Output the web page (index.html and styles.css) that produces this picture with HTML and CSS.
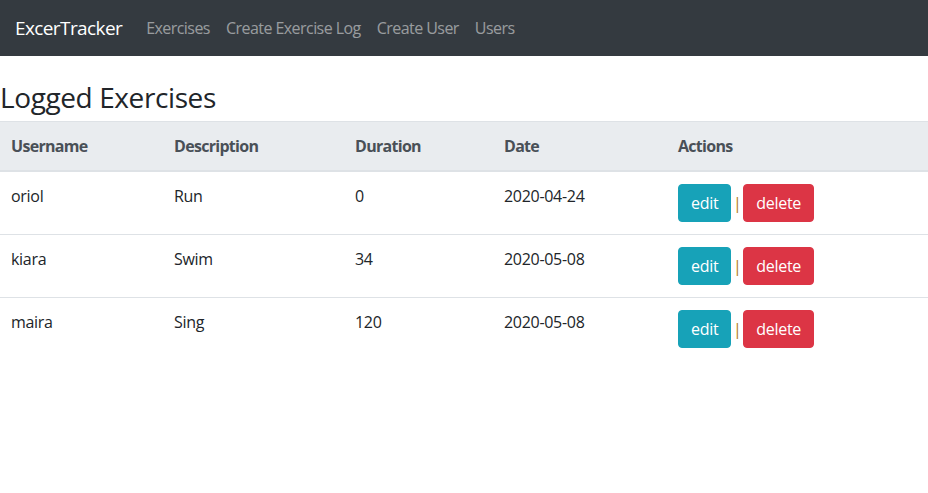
FILE: index.html
```html
<!DOCTYPE html>
<html lang="en">
<head>
<meta charset="utf-8">
<title>ExcerTracker</title>
<link rel="stylesheet" href="styles.css">
</head>
<body>
<nav class="navbar">
  <a class="brand" href="#">ExcerTracker</a>
  <ul class="nav">
    <li><a class="nav-link" href="#">Exercises</a></li>
    <li><a class="nav-link" href="#">Create Exercise Log</a></li>
    <li><a class="nav-link" href="#">Create User</a></li>
    <li><a class="nav-link" href="#">Users</a></li>
  </ul>
</nav>
<main>
  <h3 class="title">Logged Exercises</h3>
  <table class="table">
    <thead>
      <tr>
        <th class="c-user">Username</th>
        <th class="c-desc">Description</th>
        <th class="c-dur">Duration</th>
        <th class="c-date">Date</th>
        <th class="c-act">Actions</th>
      </tr>
    </thead>
    <tbody>
      <tr>
        <td>oriol</td><td>Run</td><td>0</td><td>2020-04-24</td>
        <td class="actions"><button class="btn btn-info">edit</button><span class="sep">|</span><button class="btn btn-danger">delete</button></td>
      </tr>
      <tr>
        <td>kiara</td><td>Swim</td><td>34</td><td>2020-05-08</td>
        <td class="actions"><button class="btn btn-info">edit</button><span class="sep">|</span><button class="btn btn-danger">delete</button></td>
      </tr>
      <tr>
        <td>maira</td><td>Sing</td><td>120</td><td>2020-05-08</td>
        <td class="actions"><button class="btn btn-info">edit</button><span class="sep">|</span><button class="btn btn-danger">delete</button></td>
      </tr>
    </tbody>
  </table>
</main>
</body>
</html>
```

FILE: styles.css
```css
* { box-sizing: border-box; }
html, body {
  margin: 0;
  padding: 0;
  background: #fff;
}
body {
  font-family: "Open Sans", "Noto Sans", sans-serif;
  font-size: 16px;
  line-height: 24px;
  color: #212529;
}
.navbar {
  display: flex;
  align-items: center;
  height: 56px;
  padding: 8px 15px;
  background: #343a40;
}
.brand {
  font-size: 19px;
  line-height: 30px;
  color: #fff;
  text-decoration: none;
  margin-right: 16px;
  letter-spacing: -0.6px;
}
.nav {
  display: flex;
  list-style: none;
  margin: 0;
  padding: 0;
}
.nav-link {
  display: block;
  padding: 8px;
  color: rgba(255, 255, 255, 0.5);
  text-decoration: none;
  letter-spacing: -0.55px;
}
main { padding: 0; }
.title {
  margin: 25px 0 8px;
  font-size: 28px;
  line-height: 32px;
  font-weight: 500;
  letter-spacing: -0.4px;
}
.table {
  width: 100%;
  border-collapse: collapse;
  table-layout: fixed;
}
.table th, .table td {
  padding: 12px;
  text-align: left;
  vertical-align: top;
  border-top: 1px solid #dee2e6;
  letter-spacing: -0.3px;
}
.table th:first-child, .table td:first-child { padding-left: 11px; }
.table thead th {
  background: #e9ecef;
  color: #495057;
  font-weight: 700;
  letter-spacing: -0.7px;
  border-bottom: 2px solid #dee2e6;
}
.c-user { width: 162px; }
.c-desc { width: 181px; }
.c-dur { width: 149px; }
.c-date { width: 174px; }
.actions {
  white-space: nowrap;
}
.btn {
  display: inline-block;
  margin: 0;
  font-family: inherit;
  font-size: 16px;
  line-height: 24px;
  padding: 6px 12px;
  border: 1px solid transparent;
  border-radius: 4px;
  color: #fff;
  letter-spacing: -0.3px;
  vertical-align: middle;
}
.btn-info { background: #17a2b8; border-color: #17a2b8; }
.btn-danger { background: #dc3545; border-color: #dc3545; }
.sep {
  display: inline-block;
  width: 12px;
  text-align: center;
  color: #b07a1c;
  vertical-align: middle;
}
```
